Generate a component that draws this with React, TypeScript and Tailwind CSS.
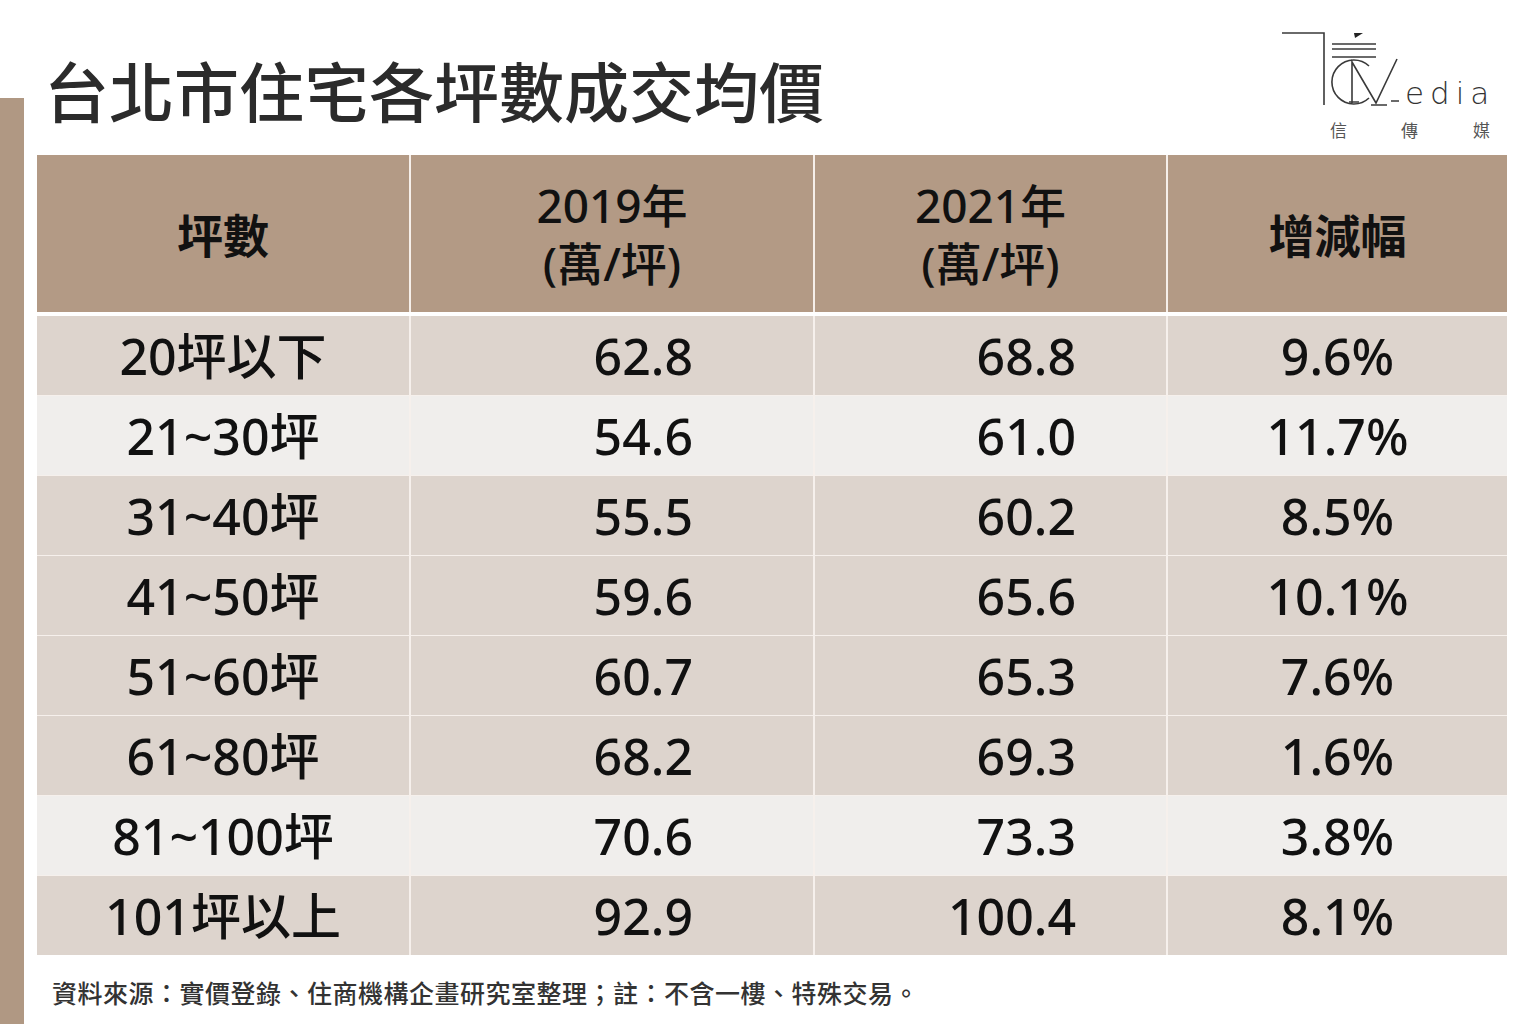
import React from "react"

const ROWS = [
  ["20坪以下", "62.8", "68.8", "9.6%"],
  ["21~30坪", "54.6", "61.0", "11.7%"],
  ["31~40坪", "55.5", "60.2", "8.5%"],
  ["41~50坪", "59.6", "65.6", "10.1%"],
  ["51~60坪", "60.7", "65.3", "7.6%"],
  ["61~80坪", "68.2", "69.3", "1.6%"],
  ["81~100坪", "70.6", "73.3", "3.8%"],
  ["101坪以上", "92.9", "100.4", "8.1%"],
]

// light rows in the source chart are the 2nd and 7th, not strictly alternating
const LIGHT = [1, 6]

const CJK = { fontFamily: '"Noto Sans CJK TC", "Noto Sans", sans-serif' }
const MIXED = { fontFamily: '"Noto Sans", "Noto Sans CJK TC", sans-serif' }

function Logo() {
  return (
    <svg width="220" height="120" viewBox="0 0 220 120" className="mt-[25px] mr-[8px] shrink-0">
      <g stroke="#3a3a3a" strokeWidth="1.6" fill="none">
        <path d="M3 8 H45 V80" />
        <path d="M53 19 H97 M53 24 H97 M53 32 H97" />
        <path d="M90 41 A22 22 0 1 0 90 73" />
        <path d="M73 78 V37 L97 78 L118 34" />
        <path d="M70 77 H80 M92 80 H108 M112 76 H120" />
      </g>
      <path d="M75 8 H84 L76 13 Z" fill="#222" />
      <text x="126" y="79" fontSize="31" letterSpacing="6" fill="#333" fontWeight="300" style={{ fontFamily: '"DejaVu Sans", sans-serif' }}>
        edia
      </text>
      <g fill="#555" fontSize="17" style={CJK}>
        <text x="51" y="112">信</text>
        <text x="122" y="112">傳</text>
        <text x="194" y="112">媒</text>
      </g>
    </svg>
  )
}

export default function App() {
  return (
    <div className="flex h-[1024px] w-[1536px] bg-white text-[#111]" style={CJK}>
      <div className="mt-[98px] w-[24px] shrink-0 bg-[#b09883]" />
      <div className="ml-[13px] flex w-[1470px] flex-col">
        <div className="flex h-[155px] items-start">
          <h1 className="pl-[7px] pt-[57px] text-[65px] font-medium leading-none text-[#2b2b2b]">
            台北市住宅各坪數成交均價
          </h1>
          <div className="ml-auto">
            <Logo />
          </div>
        </div>

        <div className="grid grid-cols-[372px_402px_351px_339px] gap-x-[2px] bg-[#f6efea]" style={MIXED}>
          <div className="flex h-[157px] items-center justify-center bg-[#b39a85] text-[46px] font-bold" style={CJK}>坪數</div>
          <div className="flex h-[157px] flex-col items-center justify-center bg-[#b39a85] text-[46px] font-medium leading-[58px]">
            <span>2019年</span>
            <span>(萬/坪)</span>
          </div>
          <div className="flex h-[157px] flex-col items-center justify-center bg-[#b39a85] text-[46px] font-medium leading-[58px]">
            <span>2021年</span>
            <span>(萬/坪)</span>
          </div>
          <div className="flex h-[157px] items-center justify-center bg-[#b39a85] text-[46px] font-bold" style={CJK}>增減幅</div>
        </div>

        <div className="mt-[4px] flex flex-col gap-y-[1px] bg-[#f6f0ec]" style={MIXED}>
          {ROWS.map((r, i) => {
            const bg = LIGHT.includes(i) ? "bg-[#f0eeec]" : "bg-[#ddd4cd]"
            return (
              <div key={r[0]} className="grid h-[79px] grid-cols-[372px_402px_351px_339px] gap-x-[2px] text-[50px] font-medium leading-none">
                <div className={`flex items-center justify-center ${bg}`}>{r[0]}</div>
                <div className={`flex items-center justify-end pr-[120px] ${bg}`}>{r[1]}</div>
                <div className={`flex items-center justify-end pr-[90px] ${bg}`}>{r[2]}</div>
                <div className={`flex items-center justify-center ${bg}`}>{r[3]}</div>
              </div>
            )
          })}
        </div>

        <p className="mt-[20px] pl-[15px] text-[25px] font-medium leading-[34px] tracking-[0.5px] text-[#333]">
          資料來源：實價登錄、住商機構企畫研究室整理；註：不含一樓、特殊交易。
        </p>
      </div>
    </div>
  )
}
